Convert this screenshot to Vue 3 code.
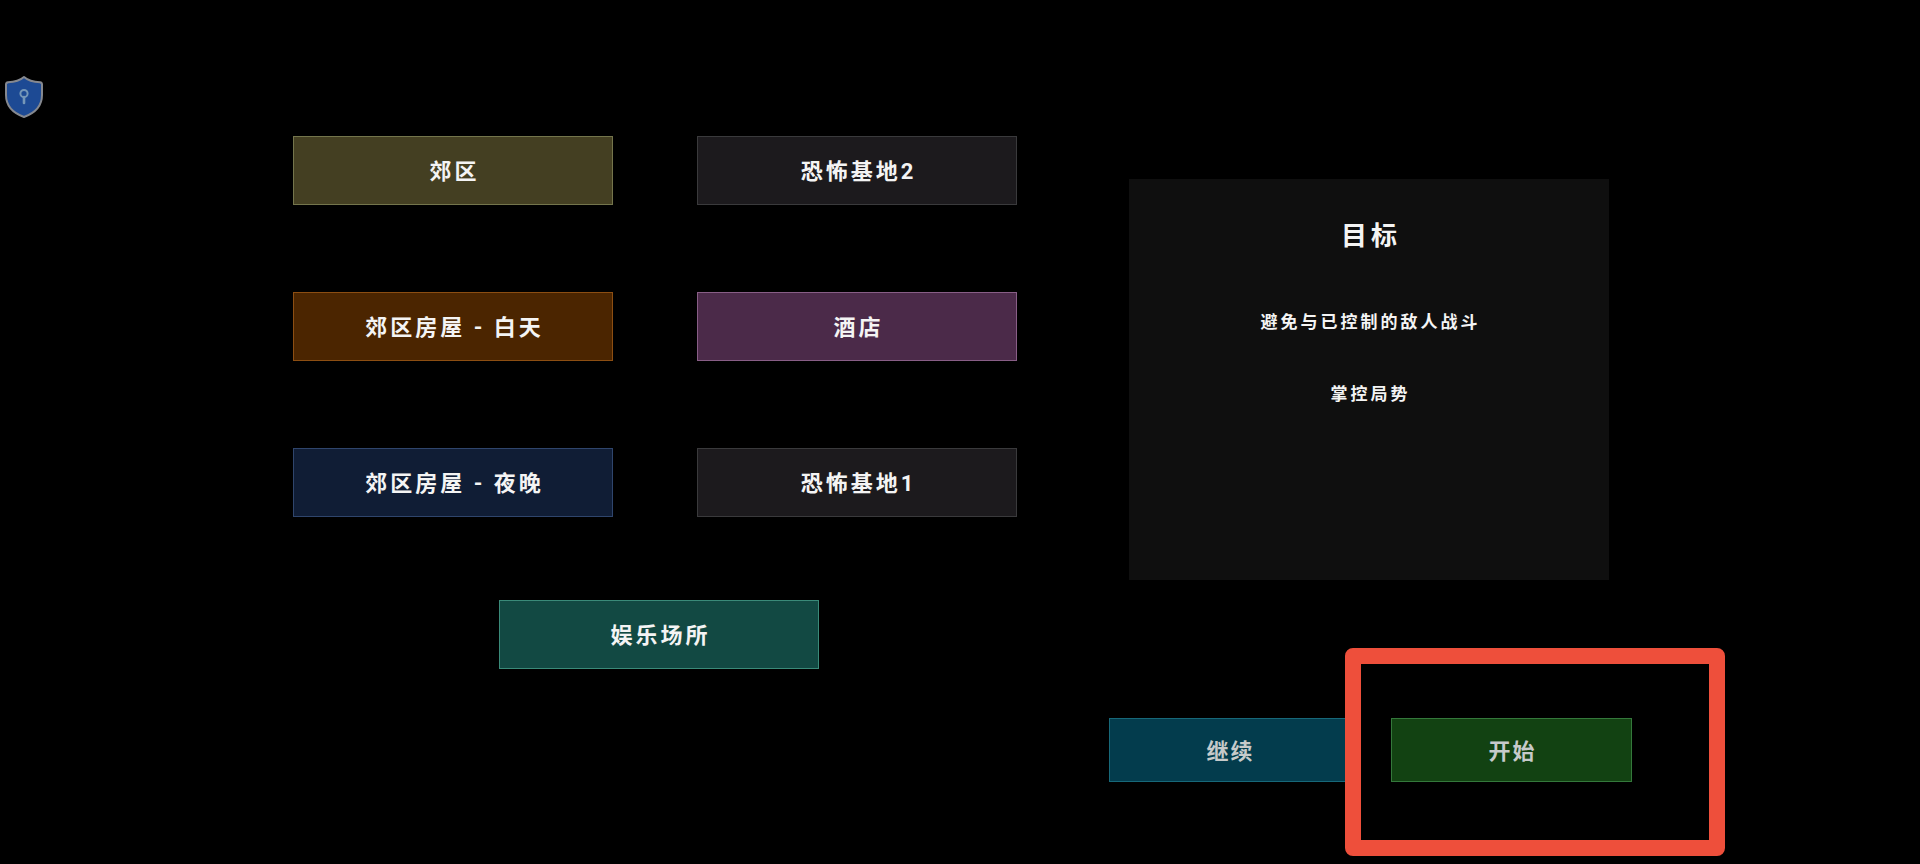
<script setup>
import { ref } from 'vue'

const maps = [
  { name: '郊区', tone: 'olive' },
  { name: '恐怖基地2', tone: 'slate' },
  { name: '郊区房屋 - 白天', tone: 'orange' },
  { name: '酒店', tone: 'purple' },
  { name: '郊区房屋 - 夜晚', tone: 'navy' },
  { name: '恐怖基地1', tone: 'slate' }
]
const goals = ['避免与已控制的敌人战斗', '掌控局势']
const selected = ref('')
</script>

<template>
  <main class="screen">
    <button class="shield" type="button" aria-label="安全">
      <svg viewBox="0 0 40 44" aria-hidden="true">
        <path
          d="M20 2 C16 5.500 10 7 4 7.200 Q2 7.500 2 9.500 V20 C2 31 9 38 20 42 C31 38 38 31 38 20 V9.500 Q38 7.500 36 7.200 C30 7 24 5.500 20 2 Z"
          fill="#1d4a94"
          stroke="#85888f"
          stroke-width="2"
          stroke-linejoin="round"
        />
        <circle cx="20" cy="18.500" r="3.600" fill="none" stroke="#7597b8" stroke-width="2" />
        <path d="M20 22 V28" stroke="#7597b8" stroke-width="2.600" stroke-linecap="round" />
      </svg>
    </button>

    <section class="maps" aria-label="地图">
      <div class="map-grid">
        <button
          v-for="map in maps"
          :key="map.name"
          type="button"
          class="tile"
          :class="map.tone"
          @click="selected = map.name"
        >{{ map.name }}</button>
      </div>
      <div class="venue-row">
        <button type="button" class="tile teal" @click="selected = '娱乐场所'">娱乐场所</button>
      </div>
    </section>

    <section class="side">
      <article class="goals">
        <h1>目标</h1>
        <ul>
          <li v-for="goal in goals" :key="goal">{{ goal }}</li>
        </ul>
      </article>
      <div class="actions">
        <button type="button" class="action resume">继续</button>
        <div class="start-wrap">
          <button type="button" class="action start">开始</button>
          <div class="marker"></div>
        </div>
      </div>
    </section>
  </main>
</template>

<style>
body {
  background: #000;
}
</style>

<style scoped>
.screen {
  position: relative;
  box-sizing: border-box;
  min-height: 100vh;
  display: grid;
  grid-template-columns: 293fr 724fr 92fr 523fr 288fr;
  align-items: start;
  background: #000;
  color: #f4f4f4;
  font-family: Roboto, "Noto Sans CJK SC", sans-serif;
  font-weight: 700;
  overflow: hidden;
}

button {
  box-sizing: border-box;
  margin: 0;
  padding: 0;
  font: inherit;
  color: inherit;
  cursor: pointer;
}

.shield {
  position: absolute;
  left: 4px;
  top: 75px;
  width: 40px;
  height: 44px;
  border: 0;
  background: none;
}

.shield svg {
  display: block;
  width: 100%;
}

.maps {
  grid-column: 2;
  padding-top: 136px;
}

.map-grid {
  display: grid;
  grid-template-columns: 1fr 1fr;
  column-gap: 84px;
  row-gap: 87px;
}

.venue-row {
  display: grid;
  grid-template-columns: 206fr 320fr 198fr;
  margin-top: 83px;
}

.venue-row .tile {
  grid-column: 2;
}

.tile {
  height: 69px;
  padding-bottom: 3px;
  border: 1px solid;
  font-size: 22px;
  letter-spacing: 3px;
  text-indent: 3px;
}

.olive {
  background: #443f22;
  border-color: #74754c;
}

.slate {
  background: #1c1a1d;
  border-color: #3a3a3c;
}

.orange {
  background: #4b2500;
  border-color: #8c4e12;
}

.purple {
  background: #4b2a49;
  border-color: #885e86;
}

.navy {
  background: #101d35;
  border-color: #2f456c;
}

.teal {
  background: #124943;
  border-color: #3a8a79;
}

.side {
  grid-column: 4;
  padding-top: 179px;
}

.goals {
  box-sizing: border-box;
  min-height: 401px;
  margin: 0 23px 0 20px;
  padding: 41px 24px;
  background: #0f0f0f;
  text-align: center;
}

h1 {
  margin: 0;
  font-size: 26px;
  line-height: 32px;
  letter-spacing: 4px;
  text-indent: 4px;
}

ul {
  display: grid;
  gap: 48px;
  margin: 58px 0 0;
  padding: 0;
  list-style: none;
}

li {
  font-size: 17px;
  line-height: 24px;
  letter-spacing: 3px;
  text-indent: 3px;
}

.actions {
  display: grid;
  grid-template-columns: 1fr 1fr;
  column-gap: 41px;
  margin-top: 138px;
}

.action {
  width: 100%;
  height: 64px;
  padding-bottom: 3px;
  border: 1px solid;
  color: #c6caca;
  font-size: 22px;
  letter-spacing: 2px;
  text-indent: 2px;
}

.resume {
  background: #033c4d;
  border-color: #176879;
}

.start {
  display: block;
  background: #124212;
  border-color: #34783b;
}

.start-wrap {
  position: relative;
}

.marker {
  position: absolute;
  inset: -70px -93px -74px -46px;
  border: 16px solid #ee4f3b;
  border-radius: 8px;
  pointer-events: none;
}
</style>
